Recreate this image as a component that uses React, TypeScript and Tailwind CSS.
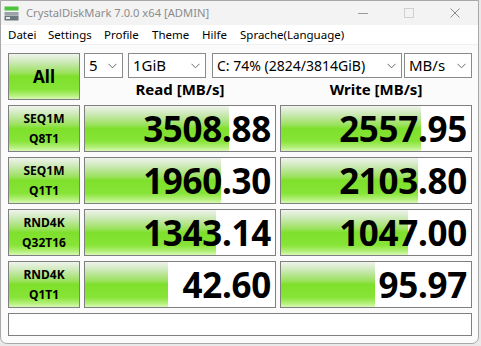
import React from 'react';

const barGradient =
  'bg-[linear-gradient(to_bottom,#f0f3ee_0%,#c8e8b0_20%,#9ae25c_42%,#7ee02c_50%,#86e436_78%,#b4f07a_92%,#d8f8b8_100%)]';

const Chevron: React.FC = () => (
  <svg width="9" height="6" viewBox="0 0 9 6" className="shrink-0">
    <path d="M0.5 0.8 L4.5 4.8 L8.5 0.8" fill="none" stroke="#6b6b6b" strokeWidth="1" />
  </svg>
);

const Select: React.FC<{ value: string; className: string }> = ({ value, className }) => (
  <div className={`h-[25px] border border-[#8a8a8a] bg-white flex items-center justify-between pl-[4px] pr-[5px] text-[15px] text-black ${className}`}>
    <span className="whitespace-nowrap leading-none">{value}</span>
    <Chevron />
  </div>
);

const Result: React.FC<{ value: string; bar: number }> = ({ value, bar }) => (
  <div className="relative w-[192px] h-[47px] border border-[#7f7f7f] bg-white overflow-hidden">
    <div className={`absolute left-0 top-0 bottom-0 ${barGradient}`} style={{ width: bar }} />
    <div className="relative h-full flex items-center justify-end pr-[4px] text-[35px] font-bold text-black tracking-[-0.3px] leading-none">
      {value}
    </div>
  </div>
);

const rows = [
  { l1: 'SEQ1M', l2: 'Q8T1', read: '3508.88', rb: 144, write: '2557.95', wb: 140 },
  { l1: 'SEQ1M', l2: 'Q1T1', read: '1960.30', rb: 136, write: '2103.80', wb: 137 },
  { l1: 'RND4K', l2: 'Q32T16', read: '1343.14', rb: 131, write: '1047.00', wb: 127 },
  { l1: 'RND4K', l2: 'Q1T1', read: '42.60', rb: 83, write: '95.97', wb: 94 },
];

const menu = [
  { label: 'Datei', w: 'w-[40px]' },
  { label: 'Settings', w: 'w-[56px]' },
  { label: 'Profile', w: 'w-[48px]' },
  { label: 'Theme', w: 'w-[50px]' },
  { label: 'Hilfe', w: 'w-[38px]' },
  { label: 'Sprache(Language)', w: 'w-auto' },
];

const App: React.FC = () => {
  return (
    <div className="w-[481px] h-[346px] bg-[#e9e9e9] font-['Noto_Sans',sans-serif] overflow-hidden">
      <div className="w-[479px] h-[344px] border border-[#a8a8a8] rounded-b-[7px] bg-[#fbfbfb] overflow-hidden">
        {/* title bar */}
        <div className="h-[24px] bg-[#f3f3f3] flex items-center">
          <svg width="15" height="15" viewBox="0 0 15 15" className="ml-[3px] mr-[7px]">
            <rect x="0.5" y="0.5" width="14" height="4" fill="#4cc43c" />
            <rect x="0.5" y="6" width="14" height="3" fill="#9aa3a8" />
            <rect x="0.5" y="9.5" width="14" height="5" fill="#6c7880" />
            <rect x="2" y="11" width="4" height="2" fill="#e8e8e8" />
          </svg>
          <span className="text-[11.2px] text-[#8c8c8c] whitespace-nowrap">CrystalDiskMark 7.0.0 x64 [ADMIN]</span>
          <div className="ml-auto flex items-center h-full">
            <div className="w-[46px] flex justify-center">
              <div className="w-[10px] h-px bg-[#9a9a9a]" />
            </div>
            <div className="w-[46px] flex justify-center">
              <div className="w-[10px] h-[10px] border border-[#d0d0d0]" />
            </div>
            <div className="w-[46px] flex justify-center">
              <svg width="10" height="10" viewBox="0 0 10 10">
                <path d="M0.5 0.5 L9.5 9.5 M9.5 0.5 L0.5 9.5" stroke="#8c8c8c" strokeWidth="1" />
              </svg>
            </div>
          </div>
        </div>
        {/* menu bar */}
        <div className="h-[20px] bg-white border-b border-[#f0f0f0] flex items-center pl-[7px] text-[11.5px] text-black">
          {menu.map((m) => (
            <span key={m.label} className={`${m.w} whitespace-nowrap`}>{m.label}</span>
          ))}
        </div>
        {/* content */}
        <div className="pl-[7px] pt-[8px]">
          <div className="flex gap-[4px]">
            <div className={`w-[72px] h-[47px] border border-[#808080] ${barGradient} flex items-center justify-center text-[17px] font-bold text-black`}>
              All
            </div>
            <div className="w-[388px] flex flex-col">
              <div className="flex">
                <Select value="5" className="w-[39px]" />
                <Select value="1GiB" className="w-[78px] ml-[5px]" />
                <Select value="C: 74% (2824/3814GiB)" className="w-[190px] ml-[6px] !text-[14px]" />
                <Select value="MB/s" className="w-[68px] ml-[2px]" />
              </div>
              <div className="flex gap-[4px] h-[22px] items-center text-[15px] font-bold text-black">
                <div className="w-[192px] text-center">Read [MB/s]</div>
                <div className="w-[192px] text-center">Write [MB/s]</div>
              </div>
            </div>
          </div>
          <div className="mt-[5px] flex flex-col gap-[5px]">
            {rows.map((r, i) => (
              <div key={i} className="flex gap-[4px]">
                <div className={`w-[72px] h-[47px] border border-[#808080] ${barGradient} flex flex-col items-center justify-center text-[12px] font-bold text-black leading-[20px]`}>
                  <span>{r.l1}</span>
                  <span>{r.l2}</span>
                </div>
                <Result value={r.read} bar={r.rb} />
                <Result value={r.write} bar={r.wb} />
              </div>
            ))}
          </div>
          <div className="mt-[5px] w-[464px] h-[23px] border border-[#7f7f7f] bg-white" />
        </div>
      </div>
    </div>
  );
};

export default App;
